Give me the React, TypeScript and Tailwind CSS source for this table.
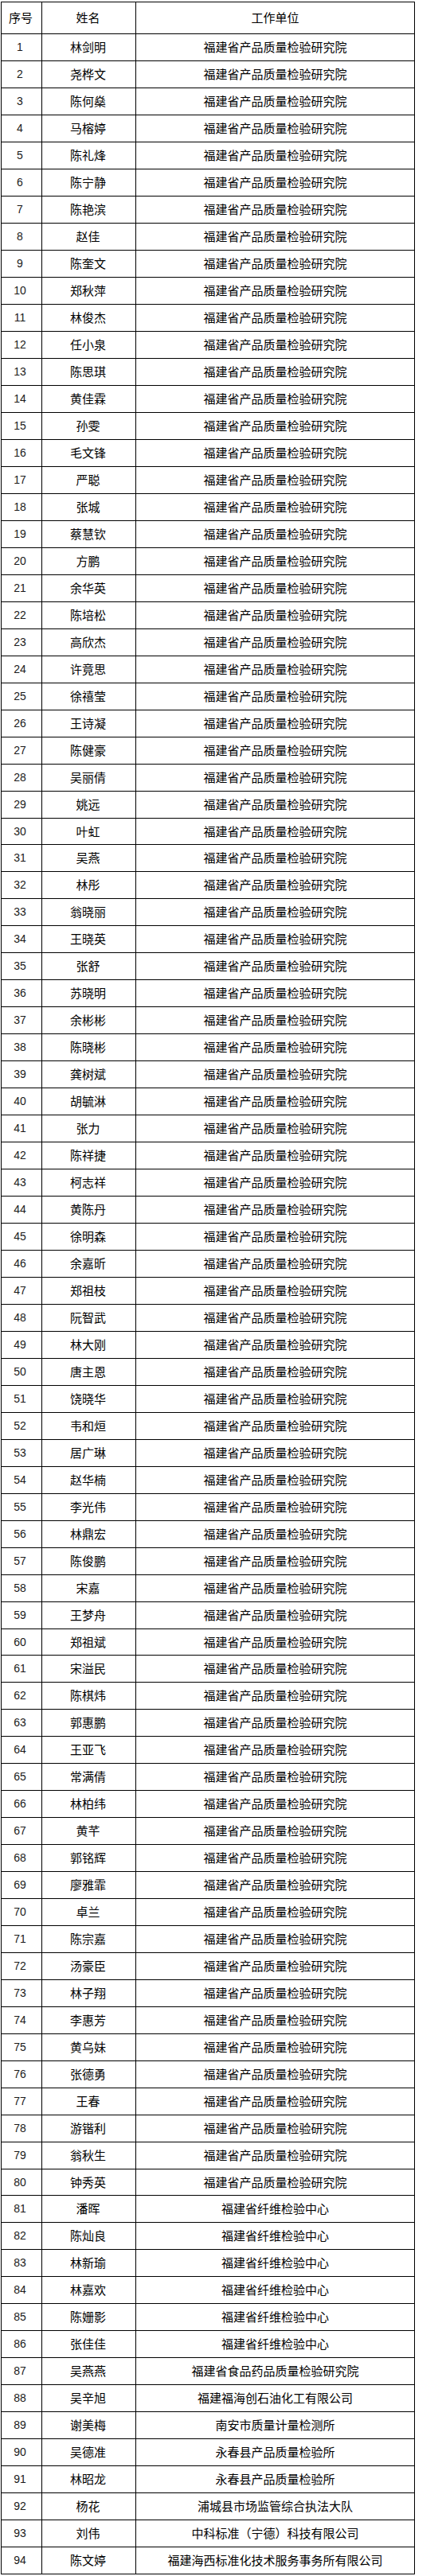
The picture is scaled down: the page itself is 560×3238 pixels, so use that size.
import React from 'react';

const ORG_PRODUCT = '福建省产品质量检验研究院';
const ORG_FIBER = '福建省纤维检验中心';

const productNames = [
  '林剑明', '尧桦文', '陈何燊', '马榕婷', '陈礼烽', '陈宁静', '陈艳滨', '赵佳', '陈奎文', '郑秋萍',
  '林俊杰', '任小泉', '陈思琪', '黄佳霖', '孙雯', '毛文锋', '严聪', '张城', '蔡慧钦', '方鹏',
  '余华英', '陈培松', '高欣杰', '许竟思', '徐禧莹', '王诗凝', '陈健豪', '吴丽倩', '姚远', '叶虹',
  '吴燕', '林彤', '翁晓丽', '王晓英', '张舒', '苏晓明', '余彬彬', '陈晓彬', '龚树斌', '胡毓淋',
  '张力', '陈祥捷', '柯志祥', '黄陈丹', '徐明森', '余嘉昕', '郑祖枝', '阮智武', '林大刚', '唐主恩',
  '饶晓华', '韦和烜', '居广琳', '赵华楠', '李光伟', '林鼎宏', '陈俊鹏', '宋嘉', '王梦舟', '郑祖斌',
  '宋溢民', '陈棋炜', '郭惠鹏', '王亚飞', '常满倩', '林柏纬', '黄芊', '郭铭辉', '廖雅霏', '卓兰',
  '陈宗嘉', '汤豪臣', '林子翔', '李惠芳', '黄乌妹', '张德勇', '王春', '游锴利', '翁秋生', '钟秀英',
];

const fiberNames = ['潘晖', '陈灿良', '林新瑜', '林嘉欢', '陈姗影', '张佳佳'];

const others: [string, string][] = [
  ['吴燕燕', '福建省食品药品质量检验研究院'],
  ['吴辛旭', '福建福海创石油化工有限公司'],
  ['谢美梅', '南安市质量计量检测所'],
  ['吴德准', '永春县产品质量检验所'],
  ['林昭龙', '永春县产品质量检验所'],
  ['杨花', '浦城县市场监管综合执法大队'],
  ['刘伟', '中科标准（宁德）科技有限公司'],
  ['陈文婷', '福建海西标准化技术服务事务所有限公司'],
];

const rows: [string, string][] = [
  ...productNames.map((n) => [n, ORG_PRODUCT] as [string, string]),
  ...fiberNames.map((n) => [n, ORG_FIBER] as [string, string]),
  ...others,
];

// the source rows are a hair under 34px, so a few are one pixel shorter
const shortRows = [29, 59, 79];

const cjk = "font-['Noto_Sans_CJK_SC',sans-serif]";
const cell = 'flex items-center justify-center border-r border-b border-black';

export default function App() {
  return (
    <div className="w-[560px] bg-white pt-[2px] pl-[1px]">
      <div className="w-[520px] border-l border-t border-black text-black">
        {/* header */}
        <div className="grid grid-cols-[51px_118px_350px] h-[40px]">
          <div className={`${cell} text-[15px] pr-[2px] ${cjk}`}>序号</div>
          <div className={`${cell} text-[15px] pr-[2px] ${cjk}`}>姓名</div>
          <div className={`${cell} text-[15px] ${cjk}`}>工作单位</div>
        </div>
        {rows.map(([name, org], i) => (
          <div
            key={i}
            className={`grid grid-cols-[51px_118px_350px] ${shortRows.includes(i) ? 'h-[33px]' : 'h-[34px]'}`}
          >
            <div className={`${cell} text-[14px] pr-[4px] font-['Liberation_Sans',sans-serif] text-[#1a1a1a]`}>
              {i + 1}
            </div>
            <div className={`${cell} text-[15px] pr-[2px] ${cjk}`}>{name}</div>
            <div className={`${cell} text-[15px] ${cjk}`}>{org}</div>
          </div>
        ))}
      </div>
    </div>
  );
}
